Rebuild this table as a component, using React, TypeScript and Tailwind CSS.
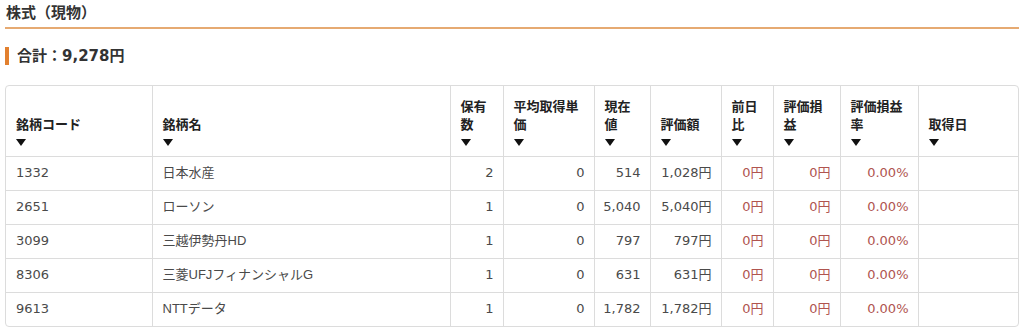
import React from 'react';

const font = '"Liberation Sans", "Noto Sans CJK JP", sans-serif';
const numFont = '"DejaVu Sans", "Noto Sans CJK JP", sans-serif';

const columns = [
  { label: ['銘柄コード'], w: 'w-[146px]' },
  { label: ['銘柄名'], w: 'w-[298px]' },
  { label: ['保有', '数'], w: 'w-[53px]' },
  { label: ['平均取得単', '価'], w: 'w-[91px]' },
  { label: ['現在', '値'], w: 'w-[56px]' },
  { label: ['評価額'], w: 'w-[71px]' },
  { label: ['前日', '比'], w: 'w-[52px]' },
  { label: ['評価損', '益'], w: 'w-[67px]' },
  { label: ['評価損益', '率'], w: 'w-[78px]' },
  { label: ['取得日'], w: 'w-[101px]' },
];

const rows = [
  ['1332', '日本水産', '2', '0', '514', '1,028円'],
  ['2651', 'ローソン', '1', '0', '5,040', '5,040円'],
  ['3099', '三越伊勢丹HD', '1', '0', '797', '797円'],
  ['8306', '三菱UFJフィナンシャルG', '1', '0', '631', '631円'],
  ['9613', 'NTTデータ', '1', '0', '1,782', '1,782円'],
];

function SortArrow() {
  return (
    <svg width="10" height="7" viewBox="0 0 10 7" className="mt-[5px] mb-[2px]">
      <path d="M0 0H10L5 7Z" fill="#111" />
    </svg>
  );
}

export default function App() {
  return (
    <div className="min-h-screen bg-white px-[5px] pt-[4px] text-[#333]" style={{ fontFamily: font }}>
      <h2 className="text-[15px] font-bold leading-[18px] pb-[5px] pl-[1px] border-b-2 border-[#e6aa72] text-[#333]">
        株式（現物）
      </h2>

      <div className="flex items-center mt-[18px] h-[18px]">
        <div className="w-[4px] h-[18px] bg-[#e2802f]" />
        <div className="ml-[8px] text-[15px] font-bold text-[#333]">
          合計：<span className="font-['DejaVu_Sans']">9,278</span>円
        </div>
      </div>

      <div className="mt-[20px] w-[1014px] border border-[#dcdcdc] rounded-[4px] overflow-hidden">
        <table className="w-full table-fixed border-collapse">
          <colgroup>
            {columns.map((c, i) => (
              <col key={i} className={c.w} />
            ))}
          </colgroup>
          <thead>
            <tr>
              {columns.map((c, i) => (
                <th
                  key={i}
                  className={`h-[70px] align-bottom text-left px-[10px] pb-[8px] text-[13px] leading-[18px] font-bold text-[#222] border-b border-[#dcdcdc] ${
                    i < columns.length - 1 ? 'border-r' : ''
                  }`}
                >
                  {c.label.map((l, j) => (
                    <div key={j}>{l}</div>
                  ))}
                  <SortArrow />
                </th>
              ))}
            </tr>
          </thead>
          <tbody>
            {rows.map((r, ri) => {
              const cells = [...r, '0円', '0円', '0.00%', ''];
              return (
                <tr key={ri}>
                  {cells.map((v, ci) => (
                    <td
                      key={ci}
                      style={ci !== 1 ? { fontFamily: numFont } : undefined}
                      className={`h-[34px] text-[13px] leading-[18px] whitespace-nowrap ${
                        ci < 2 ? 'text-left pl-[10px]' : 'text-right pr-[9px]'
                      } ${ci >= 6 && ci <= 8 ? 'text-[#b0544f]' : 'text-[#4a4a4a]'} ${
                        ci < cells.length - 1 ? 'border-r border-[#dcdcdc]' : ''
                      } ${ri < rows.length - 1 ? 'border-b border-[#dcdcdc]' : ''}`}
                    >
                      {v}
                    </td>
                  ))}
                </tr>
              );
            })}
          </tbody>
        </table>
      </div>
    </div>
  );
}
